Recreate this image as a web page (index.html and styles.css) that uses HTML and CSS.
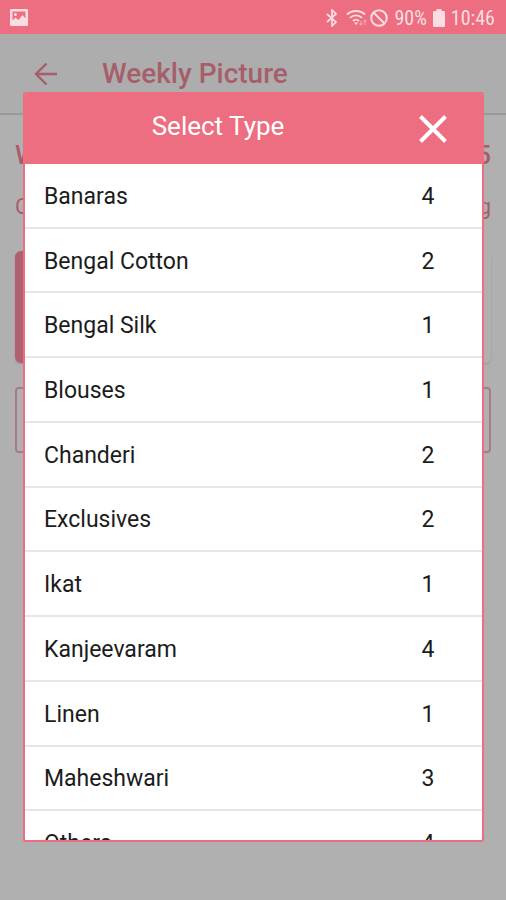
FILE: index.html
```html
<!DOCTYPE html>
<html lang="en">
<head>
<meta charset="utf-8">
<meta name="viewport" content="width=device-width, initial-scale=1">
<title>Weekly Picture</title>
<link rel="stylesheet" href="styles.css">
</head>
<body>
<div class="status">
  <svg class="photo" width="18" height="17" viewBox="0 0 18 17" aria-hidden="true"><path fill="currentColor" fill-rule="evenodd" d="M1 0h16a1 1 0 0 1 1 1v15a1 1 0 0 1-1 1H1a1 1 0 0 1-1-1V1a1 1 0 0 1 1-1zM2.500 2.500v9l3-3 3 2.500 4-5 3 3.500v-7zM5.500 4a1.500 1.500 0 1 1 0 3 1.500 1.500 0 0 1 0-3z"/></svg>
  <div class="status-right">
    <svg width="12" height="18" viewBox="0 0 12 18" fill="none" stroke="currentColor" stroke-width="1.700" aria-hidden="true"><path d="M1 5l9 8-4 4V1l4 4-9 8"/></svg>
    <svg class="wifi" width="22" height="18" viewBox="0 0 22 18" fill="none" stroke="currentColor" stroke-width="1.800" aria-hidden="true"><path d="M1 5.500c5-4.700 13-4.700 18 0M4 8.800c3.500-3.300 8.500-3.300 12 0M7 12c1.800-1.700 4.200-1.700 6 0"/><path fill="currentColor" stroke="none" d="M7.800 13.500h4.400L10 16z"/><path stroke-width="1.200" opacity=".5" d="M15 12v4M13.500 14.500L15 16l1.500-1.500M19 16v-5M17.500 12.500L19 11l1.500 1.500"/></svg>
    <svg width="18" height="18" viewBox="0 0 18 18" fill="none" stroke="currentColor" stroke-width="2" aria-hidden="true"><circle cx="9" cy="9" r="7.800"/><path d="M3.500 3.500l11 11"/></svg>
    <span class="battery-text">90%</span>
    <svg width="12" height="18" viewBox="0 0 12 18" fill="currentColor" aria-hidden="true"><path d="M3.500 0h5v2H11a1 1 0 0 1 1 1v14a1 1 0 0 1-1 1H1a1 1 0 0 1-1-1V3a1 1 0 0 1 1-1h2.500z"/></svg>
    <time class="clock">10:46</time>
  </div>
</div>
<div class="screen">
  <header class="appbar">
    <a class="back" href="#" aria-label="Back"><svg width="24" height="24" viewBox="0 0 24 24" fill="none" stroke="currentColor" stroke-width="2.400" aria-hidden="true"><path d="M23 12H2.500M12.500 1.500L2 12l10.500 10.500"/></svg></a>
    <h1>Weekly Picture</h1>
  </header>
  <main class="content">
    <div class="line week"><span>W</span><span>5</span></div>
    <div class="line caption"><span>C</span><span>g</span></div>
    <div class="card"></div>
    <div class="field"></div>
  </main>
  <section class="dialog" role="dialog" aria-labelledby="dialog-title">
    <header class="dialog-head">
      <h2 id="dialog-title">Select Type</h2>
      <button class="close" type="button" aria-label="Close"><svg width="28" height="28" viewBox="0 0 28 28" fill="none" stroke="currentColor" stroke-width="4" aria-hidden="true"><path d="M1.500 1.500l25 25M26.500 1.500l-25 25"/></svg></button>
    </header>
    <div class="scroll">
      <ul class="types">
        <li><button type="button"><span>Banaras</span><span class="count">4</span></button></li>
        <li><button type="button"><span>Bengal Cotton</span><span class="count">2</span></button></li>
        <li><button type="button"><span>Bengal Silk</span><span class="count">1</span></button></li>
        <li><button type="button"><span>Blouses</span><span class="count">1</span></button></li>
        <li><button type="button"><span>Chanderi</span><span class="count">2</span></button></li>
        <li><button type="button"><span>Exclusives</span><span class="count">2</span></button></li>
        <li><button type="button"><span>Ikat</span><span class="count">1</span></button></li>
        <li><button type="button"><span>Kanjeevaram</span><span class="count">4</span></button></li>
        <li><button type="button"><span>Linen</span><span class="count">1</span></button></li>
        <li><button type="button"><span>Maheshwari</span><span class="count">3</span></button></li>
        <li><button type="button"><span>Others</span><span class="count">4</span></button></li>
      </ul>
    </div>
  </section>
</div>
</body>
</html>
```
FILE: styles.css
```css
* { box-sizing: border-box; }

body {
  margin: 0;
  height: 100vh;
  display: flex;
  flex-direction: column;
  overflow: hidden;
  background: #b0b0b0;
  font-family: Roboto, "Liberation Sans", sans-serif;
}

h1, h2, ul { margin: 0; padding: 0; }

button {
  border: 0;
  padding: 0;
  background: none;
  color: inherit;
  font: inherit;
}

svg { display: block; flex: none; }

.status {
  height: 34px;
  flex: none;
  display: flex;
  align-items: center;
  justify-content: space-between;
  padding: 0 11px 0 10px;
  background: #ec6e80;
  color: #fbdde1;
}

.status-right {
  display: flex;
  align-items: center;
  gap: 6px;
  padding-top: 2px;
  font-family: "Roboto Condensed", Roboto, sans-serif;
  font-size: 20px;
  line-height: 24px;
}

.status-right .wifi { margin-left: 2px; margin-right: -4px; }

.screen {
  position: relative;
  flex: 1;
  min-height: 0;
}

.appbar {
  height: 81px;
  display: flex;
  align-items: center;
  gap: 44px;
  padding: 0 34px;
  border-bottom: 2px solid #999;
  background: #adadad;
  color: #a75e6b;
}

.back { color: inherit; }

.appbar h1 {
  font-size: 28px;
  line-height: 32px;
  font-weight: 500;
}

.content {
  padding: 24px 15px;
  color: #a75e6b;
}

.line { display: flex; justify-content: space-between; }

.week {
  font-size: 26px;
  line-height: 32px;
  font-weight: 500;
}

.caption {
  margin-top: 20px;
  font-size: 22px;
  line-height: 32px;
}

.card {
  height: 112px;
  margin-top: 28px;
  border-radius: 6px;
  background: linear-gradient(90deg, #b0606f 0, #b0606f 20%, #b0b0b0 60%);
  box-shadow: 0 1px 2px #959595;
}

.field {
  height: 66px;
  margin-top: 24px;
  border: 2px solid #a97a83;
  border-radius: 4px;
}

.dialog {
  position: absolute;
  inset: 58px 22px 58px 23px;
  display: flex;
  flex-direction: column;
  overflow: hidden;
  border: 2px solid #ec6e80;
  border-radius: 3px;
  background: #fff;
}

.dialog-head {
  height: 70px;
  flex: none;
  display: grid;
  grid-template-columns: 1fr 28px;
  align-items: center;
  padding-right: 35px;
  background: #ec6e80;
  color: #fff;
}

.dialog-head h2 {
  padding: 0 8px 6px 0;
  text-align: center;
  font-size: 26px;
  line-height: 32px;
  font-weight: 400;
}

.scroll {
  flex: 1;
  min-height: 0;
  overflow: hidden;
}

.types {
  height: 712px;
  display: grid;
  grid-auto-rows: 1fr;
  list-style: none;
}

.types li { border-bottom: 2px solid #e6e6e6; }

.types button {
  width: 100%;
  height: 100%;
  display: flex;
  align-items: center;
  justify-content: space-between;
  padding: 3px 40px 0 19px;
  color: #1c1c1c;
  font-size: 23px;
  line-height: 28px;
  text-align: left;
}

.count { width: 28px; text-align: center; }
```
